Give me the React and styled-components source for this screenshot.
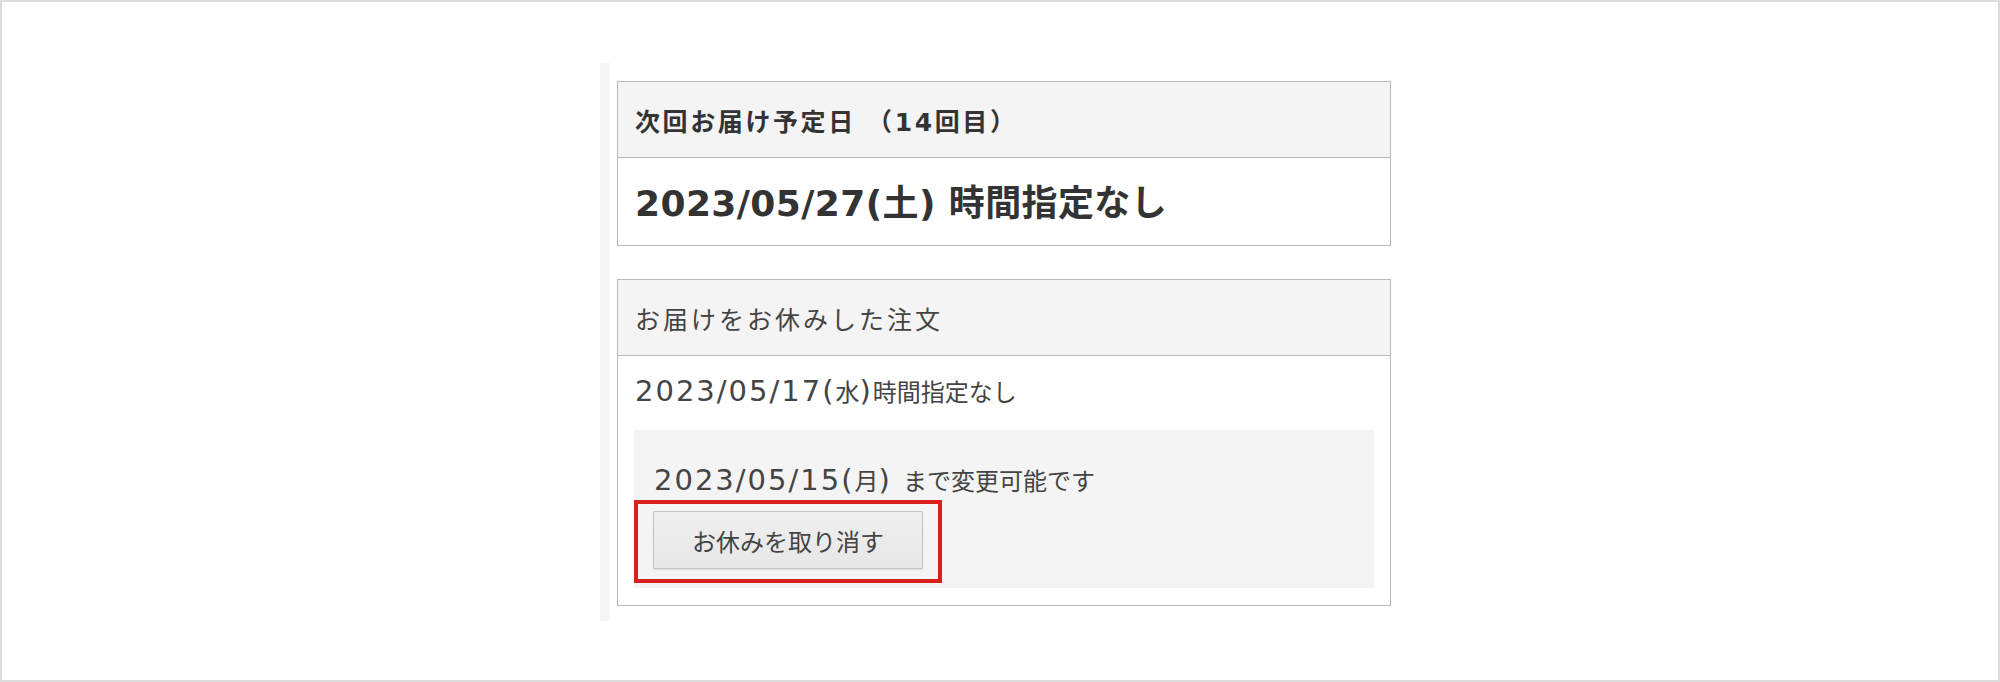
import React from "react";
import styled, { createGlobalStyle } from "styled-components";

const Global = createGlobalStyle`
  html, body { margin: 0; padding: 0; background: #fff; }
  body { font-family: "DejaVu Sans", "Noto Sans CJK JP", sans-serif; color: #333; }
  * { box-sizing: border-box; }
`;

const Frame = styled.div`
  width: 2000px;
  height: 682px;
  border: 2px solid #dcdcdc;
  padding: 61px 0 0 598px;
  background: #fff;
`;

const Column = styled.div`
  width: 791px;
  border-left: 10px solid #f6f6f6;
  padding: 18px 0 15px 7px;
  display: flex;
  flex-direction: column;
  gap: 33px;
`;

const Panel = styled.section`
  width: 774px;
  border: 1px solid #b9b9b9;
  background: #fff;
`;

const PanelHead = styled.div`
  height: 76px;
  border-bottom: 1px solid #b9b9b9;
  background: #f4f4f4;
  padding: 0 17px;
  display: flex;
  align-items: center;
  font-size: 25px;
  letter-spacing: ${(p) => (p.$bold ? 2.6 : 3)}px;
  font-weight: ${(p) => (p.$bold ? 700 : 400)};
  color: ${(p) => (p.$bold ? "#333" : "#444")};
`;

const BigRow = styled.div`
  height: 87px;
  padding: 0 17px 4px;
  display: flex;
  align-items: center;
  font-size: 36px;
  letter-spacing: 0.4px;
  font-weight: 700;
  color: #333;
`;

const Row = styled.div`
  padding: 19px 16px 17px;
`;

const Line = styled.div`
  height: 36px;
  font-size: 24px;
  line-height: 36px;
  color: #444;
  padding-left: ${(p) => p.$indent || 1}px;
  white-space: nowrap;
`;

const Latin = styled.span`
  font-size: 29px;
  line-height: 1;
  letter-spacing: 2px;
`;

const Notice = styled.div`
  margin-top: 19px;
  background: #f4f4f4;
  padding: 34px 0 5px;
`;

const Highlight = styled.div`
  width: fit-content;
  margin-top: 0;
  border: 4px solid #d9201a;
  padding: 7px 15px 10px;
`;

const Button = styled.button`
  display: block;
  width: 270px;
  height: 58px;
  border: 1px solid #c4c4c4;
  border-radius: 1px;
  background: linear-gradient(#efefef, #e7e7e7);
  box-shadow: 0 1px 1px rgba(0, 0, 0, 0.08);
  font-family: "DejaVu Sans", "Noto Sans CJK JP", sans-serif;
  font-size: 24px;
  color: #444;
  padding: 0;
  cursor: pointer;
`;

export default function App() {
  return (
    <>
      <Global />
      <Frame>
        <Column>
          <Panel>
            <PanelHead $bold>次回お届け予定日 （14回目）</PanelHead>
            <BigRow>2023/05/27(土) 時間指定なし</BigRow>
          </Panel>
          <Panel>
            <PanelHead>お届けをお休みした注文</PanelHead>
            <Row>
              <Line>
                <Latin>2023/05/17(</Latin>水<Latin>)</Latin>時間指定なし
              </Line>
              <Notice>
                <Line $indent={20}>
                  <Latin>2023/05/15(</Latin>月<Latin>) </Latin>まで変更可能です
                </Line>
                <Highlight>
                  <Button>お休みを取り消す</Button>
                </Highlight>
              </Notice>
            </Row>
          </Panel>
        </Column>
      </Frame>
    </>
  );
}
